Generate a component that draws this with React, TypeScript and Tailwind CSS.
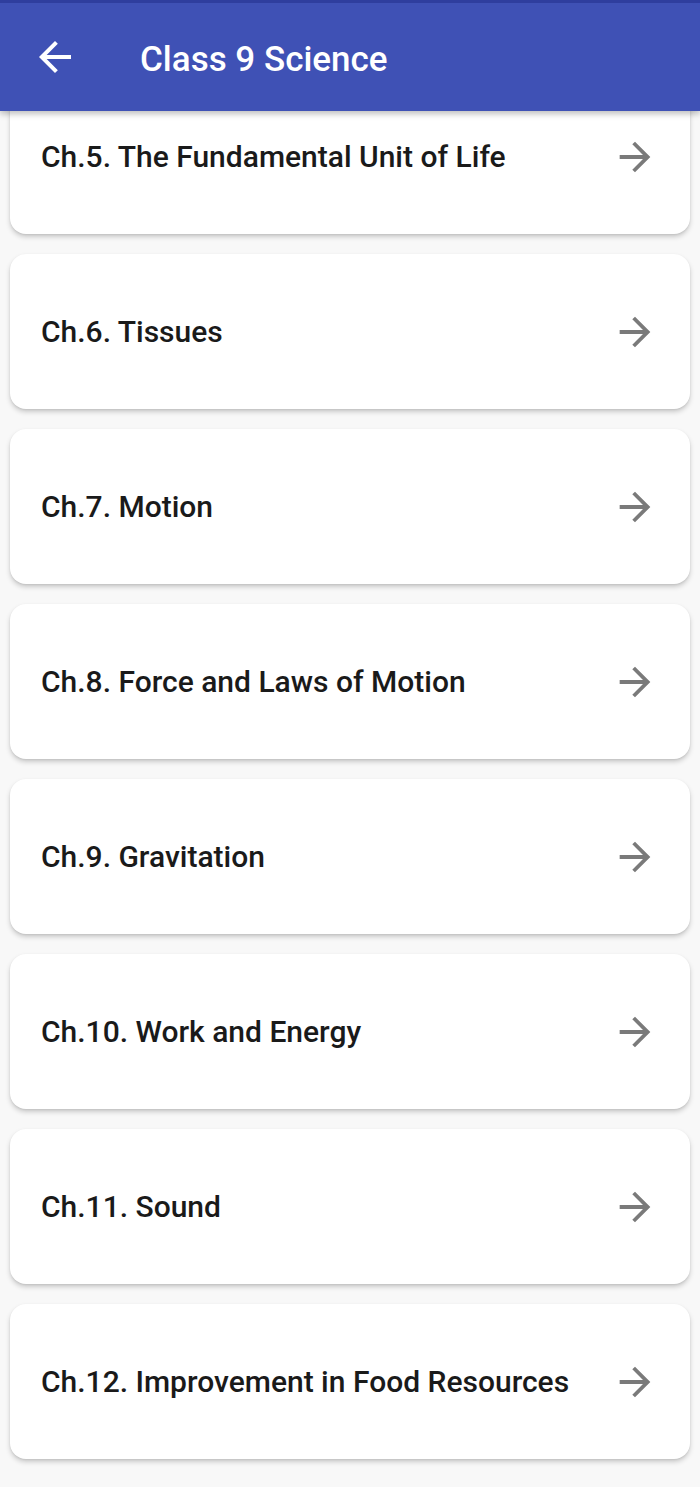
const chapters = [
  'Ch.5. The Fundamental Unit of Life',
  'Ch.6. Tissues',
  'Ch.7. Motion',
  'Ch.8. Force and Laws of Motion',
  'Ch.9. Gravitation',
  'Ch.10. Work and Energy',
  'Ch.11. Sound',
  'Ch.12. Improvement in Food Resources',
]

function ArrowBack({ className }: { className?: string }) {
  return (
    <svg viewBox="0 0 24 24" className={className} fill="currentColor">
      <path d="M20 11H7.83l5.59-5.59L12 4l-8 8 8 8 1.41-1.41L7.83 13H20v-2z" />
    </svg>
  )
}

function ArrowForward({ className }: { className?: string }) {
  return (
    <svg viewBox="0 0 24 24" className={className} fill="currentColor">
      <path d="M12 4l-1.41 1.41L16.17 11H4v2h12.17l-5.58 5.59L12 20l8-8z" />
    </svg>
  )
}

function ChapterCard({ title }: { title: string }) {
  return (
    <div className="mx-[10px] flex h-[155px] shrink-0 items-center justify-between rounded-[16px] bg-white pl-[31px] pr-[32px] shadow-[0_3px_5px_rgba(0,0,0,0.18),0_1px_2px_rgba(0,0,0,0.08)]">
      <span className="text-[30px] font-medium text-[#1a1a1a]">{title}</span>
      <ArrowForward className="size-[46px] text-[#7a7a7a]" />
    </div>
  )
}

export default function App() {
  return (
    <div
      className="flex min-h-[1487px] w-[700px] flex-col bg-[#f8f8f8]"
      style={{ fontFamily: 'Roboto, "Noto Sans", sans-serif' }}
    >
      <header className="relative z-10 flex h-[111px] shrink-0 items-center border-t-[3px] border-[#2f3e9e] bg-[#3f51b5] shadow-[0_3px_6px_rgba(0,0,0,0.25)]">
        <ArrowBack className="ml-[31px] size-[48px] text-white" />
        <h1 className="ml-[61px] mt-[6px] text-[35px] font-medium text-white">Class 9 Science</h1>
      </header>
      <div className="-mt-[32px] flex h-[1390px] flex-col gap-[20px] overflow-hidden pb-[10px]">
        {chapters.map((c) => (
          <ChapterCard key={c} title={c} />
        ))}
      </div>
    </div>
  )
}
